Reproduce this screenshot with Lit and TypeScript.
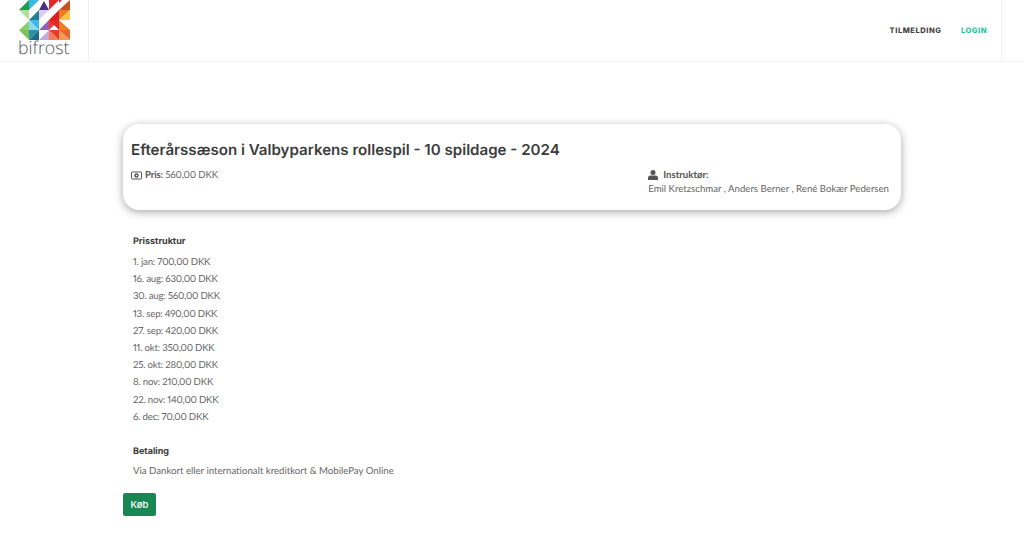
import { LitElement, html, css, svg } from "lit";
import { customElement } from "lit/decorators.js";

const PRICES = [
  "1. jan: 700,00 DKK",
  "16. aug: 630,00 DKK",
  "30. aug: 560,00 DKK",
  "13. sep: 490,00 DKK",
  "27. sep: 420,00 DKK",
  "11. okt: 350,00 DKK",
  "25. okt: 280,00 DKK",
  "8. nov: 210,00 DKK",
  "22. nov: 140,00 DKK",
  "6. dec: 70,00 DKK",
];

const TRI: [string, string][] = [
  // column 1
  ["19,10 29,0 29,10", "#1f9e49"],
  ["19,10 29,10 29,20", "#b5dc9a"],
  ["19,30 29,21 29,30", "#8ccf6d"],
  ["19,30 29,30 29,40", "#7cc25a"],
  // column 2
  ["29,0 39,0 29,10", "#3cb8e6"],
  ["39,10 29,20 39,20", "#1e7f96"],
  ["29,20 39,20 39,30", "#3cb8e6"],
  ["29,20 39,30 29,30", "#8bd9f2"],
  ["29,30 39,30 29,40", "#2d8fa8"],
  ["39,30 39,40 29,40", "#1d6c86"],
  // column 3
  ["39,10 44,1 49,10", "#4a2f88"],
  ["39,10 49,10 39,20", "#d9cfe6"],
  ["49,20 39,30 49,30", "#8d63b5"],
  ["39,40 49,30 49,40", "#c2a9dc"],
  // column 4
  ["49,0 59,0 49,10", "#e8262a"],
  ["49,20 59,10 59,20", "#d81f26"],
  ["49,20 59,20 49,30", "#ef3b2d"],
  ["49,20 59,20 59,30", "#e8262a"],
  ["49,30 59,40 49,40", "#f47c56"],
  ["49,30 59,30 59,40", "#ea3a2b"],
  // column 5
  ["59,10 70,0 70,10", "#c7521f"],
  ["59,0 62,0 59,3", "#e8262a"],
  ["59,10 70,10 59,20", "#ee7d22"],
  ["70,10 70,20 59,20", "#fcc644"],
  ["59,20 70,30 59,30", "#ee7d22"],
  ["59,30 70,30 70,40", "#e8662a"],
  ["59,30 70,40 59,40", "#f59a52"],
];

@customElement("app-root")
export class AppRoot extends LitElement {
  static styles = css`
    :host {
      display: block;
      height: 543px;
      overflow: hidden;
      background: #fff;
      font-family: Lato, "Liberation Sans", sans-serif;
      font-size: 9.65px;
      font-variant-numeric: proportional-nums;
      color: #666;
      text-rendering: geometricPrecision;
    }
    header {
      height: 62px;
      box-sizing: border-box;
      border-bottom: 1px solid #f3f3f3;
      display: flex;
      overflow: hidden;
    }
    .brand {
      width: 89px;
      box-sizing: border-box;
      border-right: 1px solid #f0f0f0;
      position: relative;
    }
    .logo {
      display: block;
    }
    .wordmark {
      position: absolute;
      left: 18px;
      top: 38px;
      font-family: "Open Sans", sans-serif;
      font-size: 17.8px;
      line-height: 20px;
      font-weight: 300;
      color: #555;
    }
    nav {
      flex: 1;
      display: flex;
      justify-content: flex-end;
      align-items: center;
      gap: 19.5px;
      padding-right: 37px;
      font-family: Inter, sans-serif;
      font-size: 7.5px;
      font-weight: 800;
      letter-spacing: 0.55px;
      color: #444;
      position: relative;
    }
    nav::after {
      content: "";
      position: absolute;
      right: 22px;
      top: 0;
      bottom: 0;
      width: 1px;
      background: #f0f0f0;
    }
    .login {
      color: #1fc4a0;
    }
    main {
      width: 778px;
      margin: 62px 0 0 123px;
    }
    .card {
      height: 86px;
      box-sizing: border-box;
      border-radius: 16px;
      box-shadow: 0 2px 8px rgba(0, 0, 0, 0.35);
      padding: 14px 12px 0 8px;
    }
    h1 {
      margin: 0;
      font-family: Inter, sans-serif;
      font-size: 15.1px;
      line-height: 24px;
      font-weight: 600;
      color: #3c3c3c;
    }
    .meta {
      display: flex;
      justify-content: space-between;
      margin-top: 6px;
      line-height: 14px;
    }
    .meta b {
      font-weight: 700;
      color: #555;
    }
    .pris {
      display: flex;
      align-items: center;
      gap: 3px;
      height: 14px;
      letter-spacing: -0.15px;
    }
    .inst {
      display: flex;
      flex-direction: column;
    }
    .inst-head {
      display: flex;
      align-items: center;
      gap: 5px;
      height: 14px;
    }
    .names {
      line-height: 15px;
      white-space: nowrap;
    }
    .content {
      padding: 25px 0 0 10px;
    }
    h2 {
      margin: 0;
      font-family: Inter, sans-serif;
      font-size: 9px;
      line-height: 14px;
      font-weight: 700;
      color: #3a3a3a;
    }
    .prices {
      margin-top: 5px;
      letter-spacing: -0.2px;
    }
    .prices div {
      line-height: 17.2px;
      height: 17.2px;
    }
    .pay-h {
      margin-top: 19px;
    }
    .pay {
      margin: 4px 0 0;
      line-height: 17px;
    }
    button {
      display: block;
      margin-top: 13px;
      width: 33px;
      height: 23px;
      padding: 0;
      border: 0;
      border-radius: 2px;
      background: #198754;
      color: #fff;
      font-family: Inter, sans-serif;
      font-size: 9.5px;
      font-weight: 500;
    }
  `;

  render() {
    return html`
      <header>
        <div class="brand">
          <svg class="logo" width="88" height="40" viewBox="0 0 88 40">
            ${TRI.map(([p, f]) => svg`<polygon points=${p} fill=${f}></polygon>`)}
          </svg>
          <span class="wordmark">bifrost</span>
        </div>
        <nav><span>TILMELDING</span><span class="login">LOGIN</span></nav>
      </header>
      <main>
        <section class="card">
          <h1>Efterårssæson i Valbyparkens rollespil - 10 spildage - 2024</h1>
          <div class="meta">
            <div class="pris">
              <svg width="11" height="9" viewBox="0 0 11 9">
                <rect x=".5" y="1" width="10" height="7" rx=".8" fill="none" stroke="#555"></rect>
                <circle cx="5.5" cy="4.5" r="2.2" fill="#555"></circle>
                <circle cx="5.5" cy="4.5" r=".8" fill="#fff"></circle>
              </svg>
              <span><b>Pris:</b> 560,00 DKK</span>
            </div>
            <div class="inst">
              <div class="inst-head">
                <svg width="10" height="10" viewBox="0 0 10 10">
                  <circle cx="5" cy="2.5" r="2.5" fill="#555"></circle>
                  <path d="M0 10V8a2.5 2.5 0 0 1 2.5-2.5h5A2.5 2.5 0 0 1 10 8v2z" fill="#555"></path>
                </svg>
                <b>Instruktør:</b>
              </div>
              <div class="names">Emil Kretzschmar , Anders Berner , René Bokær Pedersen</div>
            </div>
          </div>
        </section>
        <div class="content">
          <h2>Prisstruktur</h2>
          <div class="prices">${PRICES.map((p) => html`<div>${p}</div>`)}</div>
          <h2 class="pay-h">Betaling</h2>
          <p class="pay">Via Dankort eller internationalt kreditkort &amp; MobilePay Online</p>
        </div>
        <button>Køb</button>
      </main>
    `;
  }
}
